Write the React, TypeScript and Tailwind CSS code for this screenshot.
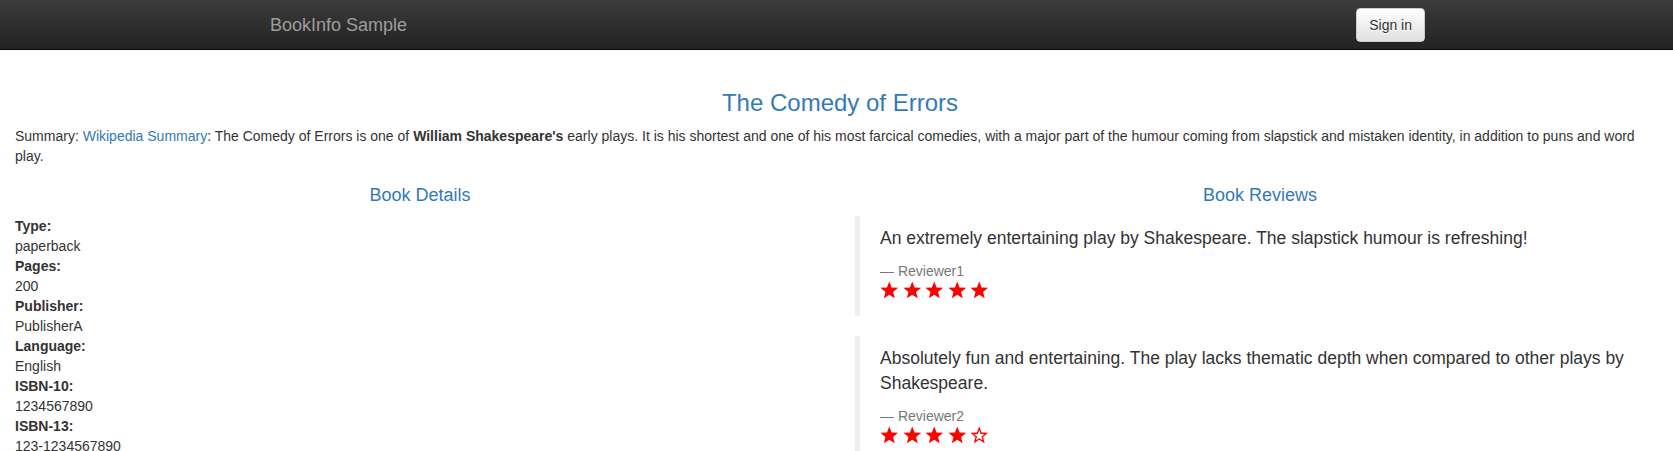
import React from "react";

const details = [
  { label: "Type:", value: "paperback" },
  { label: "Pages:", value: "200" },
  { label: "Publisher:", value: "PublisherA" },
  { label: "Language:", value: "English" },
  { label: "ISBN-10:", value: "1234567890" },
  { label: "ISBN-13:", value: "123-1234567890" },
];

const reviews = [
  {
    text: "An extremely entertaining play by Shakespeare. The slapstick humour is refreshing!",
    reviewer: "Reviewer1",
    stars: 5,
  },
  {
    text: "Absolutely fun and entertaining. The play lacks thematic depth when compared to other plays by Shakespeare.",
    reviewer: "Reviewer2",
    stars: 4,
  },
];

// glyphicon-like star, a bit fatter than the usual 5-point star
const STAR =
  "10,0.5 12.53,7.02 19.51,7.41 14.09,11.83 15.88,18.59 10,14.8 4.12,18.59 5.91,11.83 0.49,7.41 7.47,7.02";

function Star({ filled }: { filled: boolean }) {
  return (
    <svg viewBox="0 0 20 19.2" className="h-[17.8px] w-[18.5px]">
      <polygon points={STAR} fill="#ff0000" />
      {!filled && (
        <g transform="translate(10 10.8) scale(0.6) translate(-10 -10.8)">
          <polygon points={STAR} fill="#ffffff" />
        </g>
      )}
    </svg>
  );
}

export default function App() {
  return (
    <div className="w-full overflow-hidden bg-white font-['Liberation_Sans',Arial,sans-serif] text-[14px] leading-[20px] text-[#333]">
      <div className="w-[1680px]">
        {/* navbar */}
        <nav className="h-[50px] border-b border-[#080808] bg-linear-to-b from-[#3c3c3c] to-[#222]">
          <div className="mx-auto flex h-full w-[1170px] items-center justify-between pl-[15px]">
            <span className="text-[18px] leading-[20px] text-[#9d9d9d]">BookInfo Sample</span>
            <button className="h-[34px] rounded-[4px] border border-[#ccc] bg-linear-to-b from-white to-[#e0e0e0] px-[12px] text-[14px] leading-[20px] text-[#333] shadow-[0_1px_1px_rgba(0,0,0,0.075)] [text-shadow:0_1px_0_#fff]">
              Sign in
            </button>
          </div>
        </nav>

        <div className="px-[15px] pt-[20px]">
          <h3 className="mt-[20px] mb-[10px] text-center text-[24px] leading-[1.1] font-normal text-[#337ab7]">
            The Comedy of Errors
          </h3>
          <p className="mb-[10px]">
            Summary: <a className="text-[#337ab7]">Wikipedia Summary</a>: The Comedy of Errors is one of{" "}
            <b>William Shakespeare's</b> early plays. It is his shortest and one of his most farcical comedies, with a
            major part of the humour coming from slapstick and mistaken identity, in addition to puns and word play.
          </p>

          <div className="-mx-[15px] flex">
            {/* details */}
            <div className="w-1/2 px-[15px]">
              <h4 className="mt-[10px] mb-[10px] text-center text-[18px] leading-[1.1] text-[#337ab7]">Book Details</h4>
              <dl className="mb-[20px]">
                {details.map((d) => (
                  <React.Fragment key={d.label}>
                    <dt className="font-bold">{d.label}</dt>
                    <dd>{d.value}</dd>
                  </React.Fragment>
                ))}
              </dl>
            </div>

            {/* reviews */}
            <div className="w-1/2 px-[15px]">
              <h4 className="mt-[10px] mb-[10px] text-center text-[18px] leading-[1.1] text-[#337ab7]">Book Reviews</h4>
              {reviews.map((r) => (
                <blockquote
                  key={r.reviewer}
                  className="mb-[20px] border-l-[5px] border-[#eee] py-[10px] px-[20px] text-[17.5px] leading-[25px]"
                >
                  <p className="mb-[10px]">{r.text}</p>
                  <small className="block text-[14px] leading-[20px] text-[#777]">— {r.reviewer}</small>
                  <div className="flex h-[25px] items-start gap-[4px]">
                    {[0, 1, 2, 3, 4].map((i) => (
                      <Star key={i} filled={i < r.stars} />
                    ))}
                  </div>
                </blockquote>
              ))}
            </div>
          </div>
        </div>
      </div>
    </div>
  );
}
